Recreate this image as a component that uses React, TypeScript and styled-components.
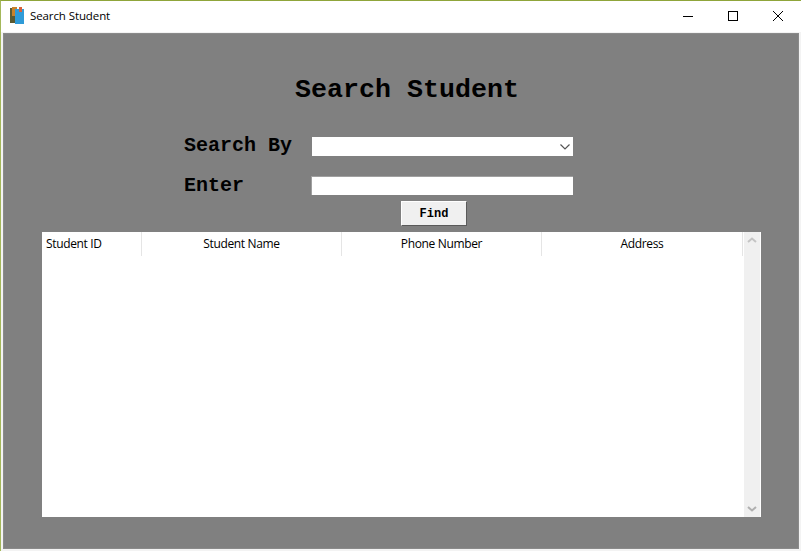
import React from "react";
import styled, { createGlobalStyle } from "styled-components";

const Global = createGlobalStyle`
  html, body { margin: 0; padding: 0; background: #fff; }
  #root { width: 801px; height: 551px; }
`;

const Win = styled.div`
  width: 801px;
  height: 551px;
  box-sizing: border-box;
  border-top: 1px solid #8fa53a;
  border-left: 1px solid #a4b85a;
  background: #f3f3f3;
  display: flex;
  flex-direction: column;
  overflow: hidden;
`;

const TitleBar = styled.div`
  height: 31px;
  flex: none;
  box-sizing: border-box;
  background: #fff;
  display: flex;
  align-items: center;
  padding: 0 1px 2px 9px;
  font: 11.5px "Open Sans", "Noto Sans", sans-serif;
  color: #000;
`;

const AppIcon = styled.svg`
  width: 15px;
  height: 17px;
  margin-right: 5px;
  flex: none;
`;

const TitleText = styled.span`
  flex: 1;
  letter-spacing: -0.1px;
`;

const WinButton = styled.button`
  width: 45px;
  height: 29px;
  border: 0;
  padding: 0;
  background: transparent;
  display: flex;
  align-items: center;
  justify-content: center;
`;

const Body = styled.div`
  flex: 1;
  background: #808080;
  box-shadow: inset 0 0 0 1px #8a8a8a;
  margin: 1px 2px 2px 2px;
  display: flex;
  flex-direction: column;
`;

const Heading = styled.h1`
  margin: 41px 0 0 0;
  padding-left: 292px;
  height: 32px;
  font: bold 26.67px/32px "Liberation Mono", monospace;
  color: #000;
`;

const FormRow = styled.div<{ $top: number }>`
  display: flex;
  align-items: center;
  height: 19px;
  margin-top: ${(p) => p.$top}px;
  padding-left: 181px;
`;

const FieldLabel = styled.label<{ $width: number; $raise?: boolean }>`
  width: ${(p) => p.$width}px;
  flex: none;
  font: bold 20px/19px "Liberation Mono", monospace;
  color: #000;
  margin-top: ${(p) => (p.$raise ? "-2px" : "0")};
`;

const Combo = styled.div`
  width: 261px;
  height: 19px;
  background: #fff;
  display: flex;
  align-items: center;
  justify-content: flex-end;
  padding-right: 3px;
  box-sizing: border-box;
`;

const Entry = styled.input`
  width: 262px;
  height: 19px;
  box-sizing: border-box;
  background: #fff;
  border: 0;
  border-top: 1px solid #a0a0a0;
  border-left: 1px solid #a0a0a0;
  padding: 0;
  outline: 0;
`;

const FindRow = styled.div`
  display: flex;
  padding-left: 398px;
  margin-top: 6px;
`;

const FindButton = styled.button`
  width: 66px;
  height: 25px;
  box-sizing: border-box;
  padding: 0;
  background: #f0f0f0;
  border: 1px solid;
  border-color: #fff #5a5a5a #5a5a5a #fff;
  font: bold 12px "Liberation Mono", monospace;
  color: #000;
`;

const TableWrap = styled.div`
  display: flex;
  margin: 6px 0 0 39px;
  width: 720px;
  height: 285px;
`;

const Table = styled.div`
  width: 701px;
  background: #fff;
  flex: none;
`;

const HeaderRow = styled.div`
  display: flex;
  height: 24px;
`;

const HeaderCell = styled.div<{ $width: number; $left?: boolean }>`
  width: ${(p) => p.$width}px;
  box-sizing: border-box;
  border-right: 1px solid #e5e5e5;
  display: flex;
  align-items: center;
  justify-content: ${(p) => (p.$left ? "flex-start" : "center")};
  padding-left: ${(p) => (p.$left ? "4px" : "0")};
  padding-bottom: 1px;
  font: 12px "Open Sans", "Noto Sans", sans-serif;
  letter-spacing: -0.35px;
  color: #000;
`;

const ScrollBar = styled.div`
  width: 18px;
  flex: none;
  background: #f0f0f0;
  border-left: 1px solid #fff;
  border-right: 1px solid #fff;
  box-sizing: border-box;
  display: flex;
  flex-direction: column;
  justify-content: space-between;
  align-items: center;
  padding: 5px 0;
`;

const Chevron = ({ d, color, width = 2 }: { d: string; color: string; width?: number }) => (
  <svg width="10" height="6" viewBox="0 0 10 6" fill="none" stroke={color} strokeWidth={width}>
    <path d={d} />
  </svg>
);

export default function App() {
  return (
    <Win>
      <Global />
      <TitleBar>
        <AppIcon viewBox="0 0 15 17">
          <rect x="0" y="1" width="6" height="15" fill="#5b5a32" />
          <rect x="2" y="0" width="5" height="9" fill="#c9822a" />
          <rect x="5" y="2" width="9" height="15" fill="#2f9bd8" />
          <rect x="9" y="0" width="3" height="5" fill="#d9603a" />
        </AppIcon>
        <TitleText>Search Student</TitleText>
        <WinButton aria-label="Minimize">
          <svg width="10" height="10" viewBox="0 0 10 10"><path d="M0 5.5h10" stroke="#000" /></svg>
        </WinButton>
        <WinButton aria-label="Maximize">
          <svg width="10" height="10" viewBox="0 0 10 10"><rect x=".5" y=".5" width="9" height="9" fill="none" stroke="#000" /></svg>
        </WinButton>
        <WinButton aria-label="Close">
          <svg width="10" height="10" viewBox="0 0 10 10"><path d="M0 0l10 10M10 0L0 10" stroke="#000" /></svg>
        </WinButton>
      </TitleBar>
      <Body>
        <Heading>Search Student</Heading>
        <FormRow $top={31}>
          <FieldLabel $width={128} $raise>Search By</FieldLabel>
          <Combo>
            <Chevron d="M0.5 0.5L5 5L9.5 0.5" color="#555" width={1.2} />
          </Combo>
        </FormRow>
        <FormRow $top={20}>
          <FieldLabel $width={127}>Enter</FieldLabel>
          <Entry />
        </FormRow>
        <FindRow>
          <FindButton>Find</FindButton>
        </FindRow>
        <TableWrap>
          <Table>
            <HeaderRow>
              <HeaderCell $width={100} $left>Student ID</HeaderCell>
              <HeaderCell $width={200}>Student Name</HeaderCell>
              <HeaderCell $width={200}>Phone Number</HeaderCell>
              <HeaderCell $width={201}>Address</HeaderCell>
            </HeaderRow>
          </Table>
          <ScrollBar>
            <Chevron d="M1 5L5 1.5L9 5" color="#c4c4c4" />
            <Chevron d="M1 1L5 4.5L9 1" color="#b0b0b0" />
          </ScrollBar>
        </TableWrap>
      </Body>
    </Win>
  );
}
